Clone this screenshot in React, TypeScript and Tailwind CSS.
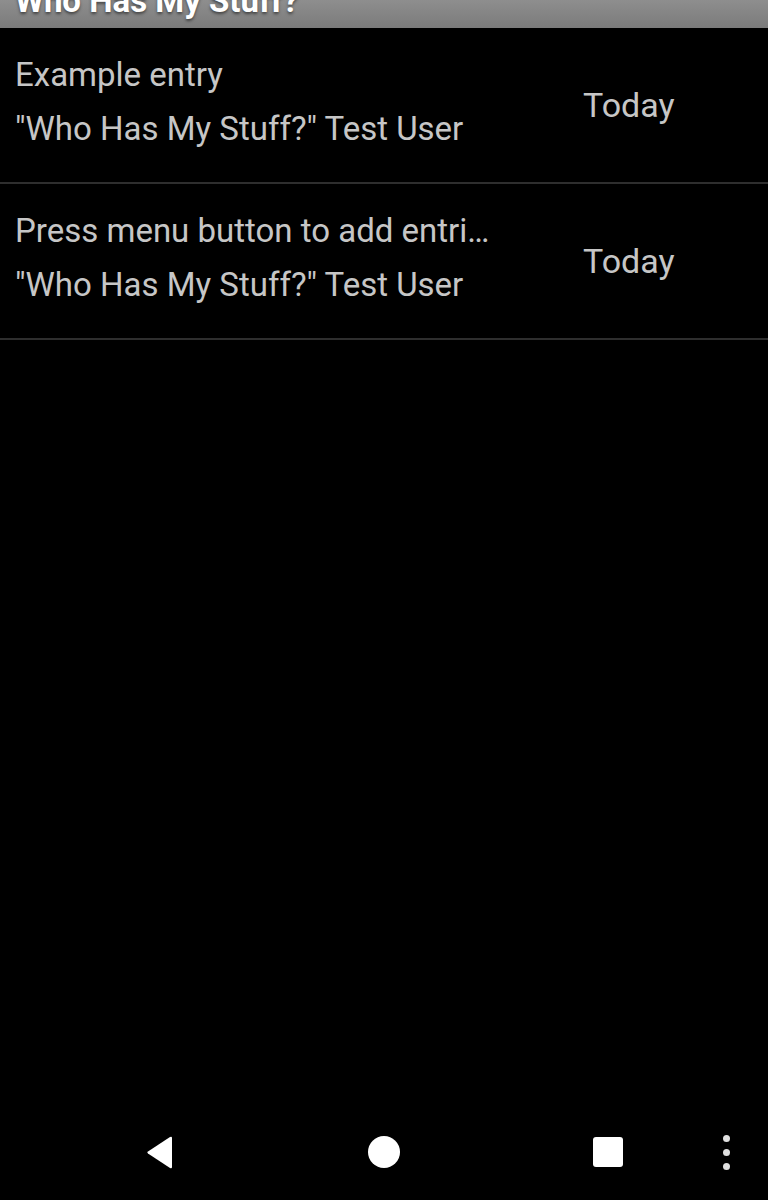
const entries = [
  { title: "Example entry", who: '"Who Has My Stuff?" Test User', date: "Today" },
  { title: "Press menu button to add entries", who: '"Who Has My Stuff?" Test User', date: "Today" },
];

export default function App() {
  return (
    <div className="flex h-[1200px] w-[768px] flex-col bg-black font-['Roboto',sans-serif]">
      <div className="h-[28px] overflow-hidden bg-gradient-to-b from-[#8e8e8e] to-[#7b7b7b]">
        <div className="-mt-[16px] pl-[15px] text-[33px] font-bold leading-[34px] text-white [text-shadow:0_2px_3px_rgba(0,0,0,0.5)]">
          Who Has My Stuff?
        </div>
      </div>

      <div className="flex-1">
        {entries.map((e, i) => (
          <div key={i} className="flex h-[156px] items-start border-b-2 border-[#2e2e2e]">
            <div className="w-[568px] pl-[15px] pt-[20px] text-[#c6c6c6]">
              <div className="w-[486px] truncate text-[33px] leading-[54px]">{e.title}</div>
              <div className="w-[486px] truncate text-[33px] leading-[54px]">{e.who}</div>
            </div>
            <div className="pl-[15px] pt-[50px] text-[34px] leading-[54px] text-[#c6c6c6]">{e.date}</div>
          </div>
        ))}
      </div>

      <div className="flex h-[96px] items-center pl-[48px]">
        <div className="flex w-[224px] justify-center">
          <svg width="30" height="33" viewBox="0 0 30 33">
            <path d="M27 2 L27 31 Q27 33 25 32 L3 17.5 Q1.5 16.5 3 15.5 L25 1 Q27 0 27 2 Z" fill="white" />
          </svg>
        </div>
        <div className="flex w-[224px] justify-center">
          <div className="h-[32px] w-[32px] rounded-full bg-white" />
        </div>
        <div className="flex w-[224px] justify-center">
          <div className="h-[30px] w-[30px] rounded-[3px] bg-white" />
        </div>
        <div className="ml-[3px] flex flex-col gap-[7px]">
          <div className="h-[7px] w-[7px] rounded-full bg-[#e0e0e0]" />
          <div className="h-[7px] w-[7px] rounded-full bg-[#e0e0e0]" />
          <div className="h-[7px] w-[7px] rounded-full bg-[#e0e0e0]" />
        </div>
      </div>
    </div>
  );
}
